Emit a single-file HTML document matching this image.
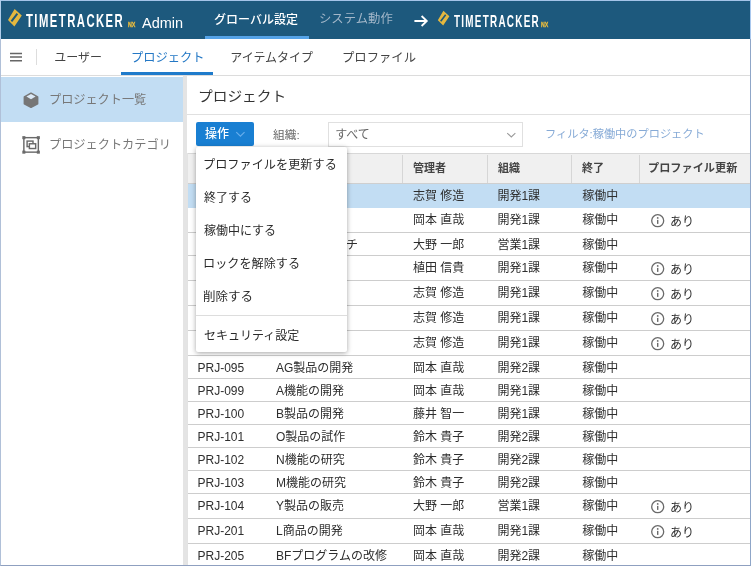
<!DOCTYPE html>
<html lang="ja">
<head>
<meta charset="utf-8">
<title>TimeTracker NX Admin - プロジェクト</title>
<style>
*{box-sizing:border-box;margin:0;padding:0}
html,body{width:751px;height:566px;overflow:hidden;background:#fff}
body{font-family:"Liberation Sans","Noto Sans CJK JP",sans-serif;color:#444;font-size:12px;position:relative;will-change:transform}
.abs{position:absolute}
.t{position:absolute;white-space:nowrap;line-height:1;transform-origin:0 50%}
#frame{left:0;top:0;width:751px;height:566px;border-left:1px solid #b0c0d8;border-top:1px solid #a4c4e8;border-right:1px solid #8fa6c8;border-bottom:1px solid #8fa0c0;pointer-events:none;z-index:50}
#frl{left:0;top:0;width:1px;height:39px;background:#b0cdea;z-index:51}
#frr{left:750px;top:0;width:1px;height:39px;background:#a9c8ee;z-index:51}
#hdr{left:1px;top:1px;width:749px;height:37.5px;background:#1d597d}
.logo{color:#fff;font-size:18.5px;font-weight:bold;letter-spacing:2.4px;transform:scaleX(.61)}
.logo2{color:#fff;font-size:16.2px;font-weight:bold;letter-spacing:2.1px;transform:scaleX(.61)}
.nx{color:#ecbd3c;-webkit-text-stroke:.35px #ecbd3c;font-size:7.5px;font-weight:bold;transform:scaleX(.76)}
.admin{color:#fff;font-size:14.5px}
.gtab{color:#fff;font-size:12px;font-weight:500}
.gtab.off{color:#a3b7c9;font-weight:400}
#gline{left:205px;top:36px;width:104px;height:3px;background:#55a3e8}
#bar2{left:1px;top:38.5px;width:749px;height:37px;background:#fff;border-bottom:1px solid #dcdcdc}
.ham{left:10px;width:12px;height:1.7px;background:#666}
#vdiv{left:36px;top:49px;width:1px;height:16px;background:#ddd}
.tab{font-size:12px;color:#444}
.tab.on{color:#2478c5}
#tline{left:121px;top:72px;width:92px;height:3px;background:#1f7bcb}
#side{left:1px;top:76px;width:182.3px;height:490px;background:#fff}
#sel{left:1px;top:76.5px;width:182.3px;height:45px;background:#c2ddf3}
#split{left:183.3px;top:76px;width:3.3px;height:490px;background:#e4e4e4}
.sitem{font-size:12px;color:#777}
#main{left:186.6px;top:76px;width:563.4px;height:490px;background:#fff}
#title{font-size:14px;color:#333}
#tsep{left:186.6px;top:113.8px;width:563.4px;height:1px;background:#e0e0e0}
#btn{left:196.2px;top:122px;width:57.8px;height:23.6px;background:#197fd2;border-radius:2px}
#sel2{left:328px;top:121.5px;width:195px;height:25.2px;border:1px solid #e0e0e0;background:#fff}
#grid{left:187px;top:153px;width:563px;height:413px;border-left:1px solid #e3e3e3}
.hd{left:0;top:0;width:562px;height:30.5px;background:#f0f0f0;border-top:1px solid #d8d8d8;border-bottom:1px solid #cfcfcf}
.vl{top:1px;width:1px;height:28px;background:#d6d6d6}
.row{left:0;width:562px;border-bottom:1px solid #cdcdcd;background:#fff}
.row.s{background:#c2ddf3;border-bottom-color:#c2ddf3}
.c{font-size:12px;color:#2e2e2e}
.h{font-size:11px;color:#444;font-weight:700}
.ic{position:absolute;width:13.4px;height:13.4px}
#menu{left:195.8px;top:147.3px;width:150.8px;height:204.9px;background:#fff;box-shadow:0 1px 5px rgba(0,0,0,.36);border-radius:2px;z-index:10}
.mi{font-size:12px;color:#2a2a2a}
#msep{left:0;top:167.7px;width:150.8px;height:1px;background:#ddd}
</style>
</head>
<body>
<!-- header -->
<div id="hdr" class="abs"></div>
<svg class="abs" style="left:7px;top:8px" width="16" height="20" viewBox="0 0 16 20"><path fill-rule="evenodd" fill="#e4b83f" d="M7.64 1 L14.8 7.39 L7.4 18.5 L1 12.09 Z M11.16 6.26 L9.58 5.04 L3.64 12.72 L5.22 13.94 Z"/></svg>
<span id="logo1" class="t logo" style="left:26px;top:11.5px;transform:scaleX(0.61);">TIMETRACKER</span>
<span id="nx1" class="t nx" style="left:128px;top:21.0px;transform:scaleX(0.7116);">NX</span>
<span id="admin" class="t admin" style="left:142px;top:15.5px;">Admin</span>
<span id="g1" class="t gtab" style="left:214.1px;top:13.5px;">グローバル設定</span>
<div id="gline" class="abs"></div>
<span id="g2" class="t gtab off" style="left:319.09px;top:13.25px;transform:scaleX(1.03);">システム動作</span>
<svg class="abs" style="left:412px;top:14px" width="18" height="14" viewBox="0 0 18 14"><path d="M2.4 7 H14.6 M9.6 2 L14.8 7 L9.6 12" fill="none" stroke="#fff" stroke-width="1.8"/></svg>
<svg class="abs" style="left:437.4px;top:9.6px" width="13.4" height="16.8" viewBox="0 0 16 20"><path fill-rule="evenodd" fill="#e4b83f" d="M7.64 1 L14.8 7.39 L7.4 18.5 L1 12.09 Z M11.16 6.26 L9.58 5.04 L3.64 12.72 L5.22 13.94 Z"/></svg>
<span id="logo2" class="t logo2" style="left:453.6px;top:12.5px;transform:scaleX(0.61);">TIMETRACKER</span>
<span id="nx2" class="t nx" style="left:541.3px;top:20.7px;transform:scaleX(0.6935);">NX</span>
<!-- second bar -->
<div id="bar2" class="abs"></div>
<svg class="abs" style="left:9px;top:50px" width="14" height="14" viewBox="0 0 14 14"><path d="M1 3.5 H13 M1 7.1 H13 M1 10.7 H13" stroke="#666" stroke-width="1.5" fill="none"/></svg>
<div id="vdiv" class="abs"></div>
<span id="t1" class="t tab" style="left:54.28px;top:51.65px;">ユーザー</span>
<span id="t2" class="t tab on" style="left:131px;top:52.2px;transform:scaleX(1.0203);">プロジェクト</span>
<div id="tline" class="abs"></div>
<span id="t3" class="t tab" style="left:230.28px;top:51.7px;">アイテムタイプ</span>
<span id="t4" class="t tab" style="left:342px;top:51.7px;transform:scaleX(1.0286);">プロファイル</span>
<!-- sidebar -->
<div id="side" class="abs"></div><div id="sel" class="abs"></div>
<svg class="abs" style="left:23px;top:91.6px" width="16" height="16.5" viewBox="0 0 16 16.5"><path d="M8 1.2 L14.6 4.9 V11.7 L8 15.3 L1.4 11.7 V4.9 Z" fill="#767676" stroke="#767676" stroke-width="1.6" stroke-linejoin="round"/><path d="M8 2 L12.6 4.6 L8 7.2 L3.4 4.6 Z" fill="#dbe9f6"/></svg>
<span id="s1" class="t sitem" style="left:49.19px;top:93.9px;transform:scaleX(1.0126);">プロジェクト一覧</span>
<svg class="abs" style="left:20.8px;top:135px" width="20" height="20" viewBox="0 0 21 21"><g fill="none" stroke="#6a6a6a" stroke-width="1.5"><rect x="3" y="2.8" width="15.2" height="15.2"/><rect x="6.4" y="6.4" width="6.2" height="5.8"/><rect x="8.8" y="9.2" width="6.6" height="5" fill="#fff"/></g><g fill="#6a6a6a"><rect x="1.4" y="1.2" width="3.2" height="3.2"/><rect x="16.6" y="1.2" width="3.2" height="3.2"/><rect x="1.4" y="16.4" width="3.2" height="3.2"/><rect x="16.6" y="16.4" width="3.2" height="3.2"/></g></svg>
<span id="s2" class="t sitem" style="left:49.19px;top:138.75px;transform:scaleX(1.0154);">プロジェクトカテゴリ</span>
<div id="split" class="abs"></div>
<!-- main -->
<div id="main" class="abs"></div>
<span id="title" class="t" style="left:197.83px;top:88.75px;transform:scaleX(1.0495);">プロジェクト</span>
<div id="tsep" class="abs"></div>
<div id="btn" class="abs"></div>
<span id="btxt" class="t" style="left:205px;top:128.2px;font-size:12px;color:#fff;font-weight:500;">操作</span>
<svg class="abs" style="left:235.3px;top:129.8px" width="10.8" height="8.1" viewBox="0 0 12 9"><path d="M1.4 2.4 L6 6.8 L10.6 2.4" fill="none" stroke="#68aeec" stroke-width="1.3"/></svg>
<span id="lbl" class="t" style="left:273px;top:129.5px;transform:scaleX(1.0708);font-size:11px;color:#666;">組織:</span>
<div id="sel2" class="abs"></div>
<span id="selv" class="t" style="left:335.19px;top:129.15px;font-size:12px;color:#666;">すべて</span>
<svg class="abs" style="left:505.6px;top:130.6px" width="10.6" height="7.95" viewBox="0 0 12 9"><path d="M1.4 2.4 L6 6.8 L10.6 2.4" fill="none" stroke="#999" stroke-width="1.2"/></svg>
<span id="filt" class="t" style="left:544.82px;top:129.35px;transform:scaleX(1.0182);font-size:11px;color:#86aad6;">フィルタ:稼働中のプロジェクト</span>
<!-- grid -->
<div id="grid" class="abs">
<div class="abs hd">
<div class="abs vl" style="left:214.4px"></div>
<div class="abs vl" style="left:298.8px"></div>
<div class="abs vl" style="left:382.7px"></div>
<div class="abs vl" style="left:451.3px"></div>
<span id="h1" class="t h" style="left:225px;top:9.2px;">管理者</span>
<span id="h2" class="t h" style="left:310px;top:9.2px;">組織</span>
<span id="h3" class="t h" style="left:393.9px;top:9.2px;">終了</span>
<span id="h4" class="t h" style="left:460.46px;top:9.2px;transform:scaleX(1.0149);">プロファイル更新</span>
</div>
<div class="abs row s" style="top:30.5px;height:24.5px">
<span id="r0a" class="t c" style="left:9.5px;top:6.4px;">PRJ-001</span><span id="r0b" class="t c" style="left:88px;top:6.4px;">X製品の開発</span><span id="r0c" class="t c" style="left:225px;top:6.4px;">志賀 修造</span><span id="r0d" class="t c" style="left:309.4px;top:6.4px;">開発1課</span><span id="r0e" class="t c" style="left:394.2px;top:6.4px;">稼働中</span>
</div>
<div class="abs row" style="top:55.0px;height:25px">
<span id="r1a" class="t c" style="left:9.5px;top:5.7px;">PRJ-002</span><span id="r1b" class="t c" style="left:88px;top:5.7px;">Z製品の開発</span><span id="r1c" class="t c" style="left:225px;top:5.7px;">岡本 直哉</span><span id="r1d" class="t c" style="left:309.4px;top:5.7px;">開発1課</span><span id="r1e" class="t c" style="left:394.2px;top:5.7px;">稼働中</span>
<svg class="ic" style="left:463.20000000000005px;top:6.3px" viewBox="0 0 13.4 13.4"><circle cx="6.7" cy="6.7" r="6" fill="none" stroke="#6a6a6a" stroke-width="1.3"/><path d="M6.7 5.9 V9.9" stroke="#6a6a6a" stroke-width="1.4"/><circle cx="6.7" cy="3.9" r=".9" fill="#6a6a6a"/></svg><span id="r1f" class="t c" style="left:482px;top:8.0px;">あり</span>
</div>
<div class="abs row" style="top:80.0px;height:23px">
<span id="r2a" class="t c" style="left:9.5px;top:5.7px;">PRJ-010</span><span id="r2b" class="t c" style="left:88px;top:5.7px;">M社アプローチ</span><span id="r2c" class="t c" style="left:225px;top:5.7px;">大野 一郎</span><span id="r2d" class="t c" style="left:309.4px;top:5.7px;">営業1課</span><span id="r2e" class="t c" style="left:394.2px;top:5.7px;">稼働中</span>
</div>
<div class="abs row" style="top:103.0px;height:25px">
<span id="r3a" class="t c" style="left:9.5px;top:5.7px;">PRJ-020</span><span id="r3b" class="t c" style="left:88px;top:5.7px;">C機能の開発</span><span id="r3c" class="t c" style="left:225px;top:5.7px;">植田 信貴</span><span id="r3d" class="t c" style="left:309.4px;top:5.7px;">開発1課</span><span id="r3e" class="t c" style="left:394.2px;top:5.7px;">稼働中</span>
<svg class="ic" style="left:463.20000000000005px;top:6.3px" viewBox="0 0 13.4 13.4"><circle cx="6.7" cy="6.7" r="6" fill="none" stroke="#6a6a6a" stroke-width="1.3"/><path d="M6.7 5.9 V9.9" stroke="#6a6a6a" stroke-width="1.4"/><circle cx="6.7" cy="3.9" r=".9" fill="#6a6a6a"/></svg><span id="r3f" class="t c" style="left:482px;top:8.0px;">あり</span>
</div>
<div class="abs row" style="top:128.0px;height:25px">
<span id="r4a" class="t c" style="left:9.5px;top:5.7px;">PRJ-030</span><span id="r4b" class="t c" style="left:88px;top:5.7px;">D機能の開発</span><span id="r4c" class="t c" style="left:225px;top:5.7px;">志賀 修造</span><span id="r4d" class="t c" style="left:309.4px;top:5.7px;">開発1課</span><span id="r4e" class="t c" style="left:394.2px;top:5.7px;">稼働中</span>
<svg class="ic" style="left:463.20000000000005px;top:6.3px" viewBox="0 0 13.4 13.4"><circle cx="6.7" cy="6.7" r="6" fill="none" stroke="#6a6a6a" stroke-width="1.3"/><path d="M6.7 5.9 V9.9" stroke="#6a6a6a" stroke-width="1.4"/><circle cx="6.7" cy="3.9" r=".9" fill="#6a6a6a"/></svg><span id="r4f" class="t c" style="left:482px;top:8.0px;">あり</span>
</div>
<div class="abs row" style="top:153.0px;height:25px">
<span id="r5a" class="t c" style="left:9.5px;top:5.7px;">PRJ-040</span><span id="r5b" class="t c" style="left:88px;top:5.7px;">E機能の開発</span><span id="r5c" class="t c" style="left:225px;top:5.7px;">志賀 修造</span><span id="r5d" class="t c" style="left:309.4px;top:5.7px;">開発1課</span><span id="r5e" class="t c" style="left:394.2px;top:5.7px;">稼働中</span>
<svg class="ic" style="left:463.20000000000005px;top:6.3px" viewBox="0 0 13.4 13.4"><circle cx="6.7" cy="6.7" r="6" fill="none" stroke="#6a6a6a" stroke-width="1.3"/><path d="M6.7 5.9 V9.9" stroke="#6a6a6a" stroke-width="1.4"/><circle cx="6.7" cy="3.9" r=".9" fill="#6a6a6a"/></svg><span id="r5f" class="t c" style="left:482px;top:8.0px;">あり</span>
</div>
<div class="abs row" style="top:178.0px;height:25px">
<span id="r6a" class="t c" style="left:9.5px;top:5.7px;">PRJ-050</span><span id="r6b" class="t c" style="left:88px;top:5.7px;">F機能の開発</span><span id="r6c" class="t c" style="left:225px;top:5.7px;">志賀 修造</span><span id="r6d" class="t c" style="left:309.4px;top:5.7px;">開発1課</span><span id="r6e" class="t c" style="left:394.2px;top:5.7px;">稼働中</span>
<svg class="ic" style="left:463.20000000000005px;top:6.3px" viewBox="0 0 13.4 13.4"><circle cx="6.7" cy="6.7" r="6" fill="none" stroke="#6a6a6a" stroke-width="1.3"/><path d="M6.7 5.9 V9.9" stroke="#6a6a6a" stroke-width="1.4"/><circle cx="6.7" cy="3.9" r=".9" fill="#6a6a6a"/></svg><span id="r6f" class="t c" style="left:482px;top:8.0px;">あり</span>
</div>
<div class="abs row" style="top:203.0px;height:23px">
<span id="r7a" class="t c" style="left:9.5px;top:5.7px;">PRJ-095</span><span id="r7b" class="t c" style="left:88px;top:5.7px;">AG製品の開発</span><span id="r7c" class="t c" style="left:225px;top:5.7px;">岡本 直哉</span><span id="r7d" class="t c" style="left:309.4px;top:5.7px;">開発2課</span><span id="r7e" class="t c" style="left:394.2px;top:5.7px;">稼働中</span>
</div>
<div class="abs row" style="top:226.0px;height:23px">
<span id="r8a" class="t c" style="left:9.5px;top:5.7px;">PRJ-099</span><span id="r8b" class="t c" style="left:88px;top:5.7px;">A機能の開発</span><span id="r8c" class="t c" style="left:225px;top:5.7px;">岡本 直哉</span><span id="r8d" class="t c" style="left:309.4px;top:5.7px;">開発1課</span><span id="r8e" class="t c" style="left:394.2px;top:5.7px;">稼働中</span>
</div>
<div class="abs row" style="top:249.0px;height:23px">
<span id="r9a" class="t c" style="left:9.5px;top:5.7px;">PRJ-100</span><span id="r9b" class="t c" style="left:88px;top:5.7px;">B製品の開発</span><span id="r9c" class="t c" style="left:225px;top:5.7px;">藤井 智一</span><span id="r9d" class="t c" style="left:309.4px;top:5.7px;">開発1課</span><span id="r9e" class="t c" style="left:394.2px;top:5.7px;">稼働中</span>
</div>
<div class="abs row" style="top:272.0px;height:23px">
<span id="r10a" class="t c" style="left:9.5px;top:5.7px;">PRJ-101</span><span id="r10b" class="t c" style="left:88px;top:5.7px;">O製品の試作</span><span id="r10c" class="t c" style="left:225px;top:5.7px;">鈴木 貴子</span><span id="r10d" class="t c" style="left:309.4px;top:5.7px;">開発2課</span><span id="r10e" class="t c" style="left:394.2px;top:5.7px;">稼働中</span>
</div>
<div class="abs row" style="top:295.0px;height:23px">
<span id="r11a" class="t c" style="left:9.5px;top:5.7px;">PRJ-102</span><span id="r11b" class="t c" style="left:88px;top:5.7px;">N機能の研究</span><span id="r11c" class="t c" style="left:225px;top:5.7px;">鈴木 貴子</span><span id="r11d" class="t c" style="left:309.4px;top:5.7px;">開発2課</span><span id="r11e" class="t c" style="left:394.2px;top:5.7px;">稼働中</span>
</div>
<div class="abs row" style="top:318.0px;height:23px">
<span id="r12a" class="t c" style="left:9.5px;top:5.7px;">PRJ-103</span><span id="r12b" class="t c" style="left:88px;top:5.7px;">M機能の研究</span><span id="r12c" class="t c" style="left:225px;top:5.7px;">鈴木 貴子</span><span id="r12d" class="t c" style="left:309.4px;top:5.7px;">開発2課</span><span id="r12e" class="t c" style="left:394.2px;top:5.7px;">稼働中</span>
</div>
<div class="abs row" style="top:341.0px;height:25px">
<span id="r13a" class="t c" style="left:9.5px;top:5.7px;">PRJ-104</span><span id="r13b" class="t c" style="left:88px;top:5.7px;">Y製品の販売</span><span id="r13c" class="t c" style="left:225px;top:5.7px;">大野 一郎</span><span id="r13d" class="t c" style="left:309.4px;top:5.7px;">営業1課</span><span id="r13e" class="t c" style="left:394.2px;top:5.7px;">稼働中</span>
<svg class="ic" style="left:463.20000000000005px;top:6.3px" viewBox="0 0 13.4 13.4"><circle cx="6.7" cy="6.7" r="6" fill="none" stroke="#6a6a6a" stroke-width="1.3"/><path d="M6.7 5.9 V9.9" stroke="#6a6a6a" stroke-width="1.4"/><circle cx="6.7" cy="3.9" r=".9" fill="#6a6a6a"/></svg><span id="r13f" class="t c" style="left:482px;top:8.0px;">あり</span>
</div>
<div class="abs row" style="top:366.0px;height:25px">
<span id="r14a" class="t c" style="left:9.5px;top:5.7px;">PRJ-201</span><span id="r14b" class="t c" style="left:88px;top:5.7px;">L商品の開発</span><span id="r14c" class="t c" style="left:225px;top:5.7px;">岡本 直哉</span><span id="r14d" class="t c" style="left:309.4px;top:5.7px;">開発1課</span><span id="r14e" class="t c" style="left:394.2px;top:5.7px;">稼働中</span>
<svg class="ic" style="left:463.20000000000005px;top:6.3px" viewBox="0 0 13.4 13.4"><circle cx="6.7" cy="6.7" r="6" fill="none" stroke="#6a6a6a" stroke-width="1.3"/><path d="M6.7 5.9 V9.9" stroke="#6a6a6a" stroke-width="1.4"/><circle cx="6.7" cy="3.9" r=".9" fill="#6a6a6a"/></svg><span id="r14f" class="t c" style="left:482px;top:8.0px;">あり</span>
</div>
<div class="abs row" style="top:391.0px;height:23px">
<span id="r15a" class="t c" style="left:9.5px;top:5.7px;">PRJ-205</span><span id="r15b" class="t c" style="left:88px;top:5.7px;">BFプログラムの改修</span><span id="r15c" class="t c" style="left:225px;top:5.7px;">岡本 直哉</span><span id="r15d" class="t c" style="left:309.4px;top:5.7px;">開発2課</span><span id="r15e" class="t c" style="left:394.2px;top:5.7px;">稼働中</span>
</div>
</div>
<!-- menu -->
<div id="menu" class="abs">
<span id="m0" class="t mi" style="left:7.3px;top:12.2px;transform:scaleX(1.0138);">プロファイルを更新する</span>
<span id="m1" class="t mi" style="left:8.2px;top:45.0px;">終了する</span>
<span id="m2" class="t mi" style="left:8.2px;top:78.1px;">稼働中にする</span>
<span id="m3" class="t mi" style="left:7.3px;top:111.0px;transform:scaleX(1.0106);">ロックを解除する</span>
<span id="m4" class="t mi" style="left:7.3px;top:143.8px;transform:scaleX(1.0439);">削除する</span>
<span id="m5" class="t mi" style="left:8.2px;top:182.9px;">セキュリティ設定</span>
<div id="msep" class="abs"></div>
</div>
<div id="frame" class="abs"></div><div id="frl" class="abs"></div><div id="frr" class="abs"></div>
</body>
</html>
